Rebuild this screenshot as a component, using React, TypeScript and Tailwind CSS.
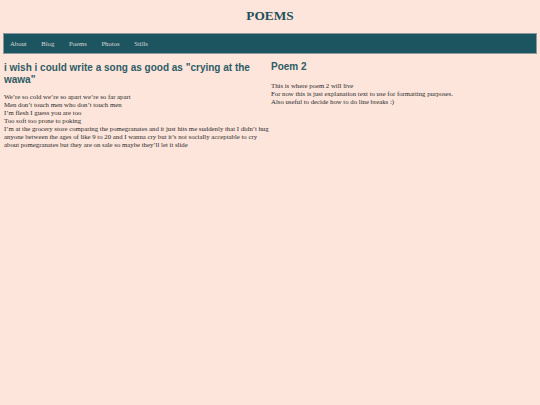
import React from 'react'

const poemOne = [
  'We\u2019re so cold we\u2019re so apart we\u2019re so far apart',
  'Men don\u2019t touch men who don\u2019t touch men',
  'I\u2019m flesh I guess you are too',
  'Too soft too prone to poking',
  'I\u2019m at the grocery store comparing the pomegranates and it just hits me suddenly that I didn\u2019t hug anyone between the ages of like 9 to 20 and I wanna cry but it\u2019s not socially acceptable to cry about pomegranates but they are on sale so maybe they\u2019ll let it slide',
]

const poemTwo = [
  'This is where poem 2 will live',
  'For now this is just explanation text to use for formatting purposes.',
  'Also useful to decide how to do line breaks :)',
]

const links = ['About', 'Blog', 'Poems', 'Photos', 'Stills']

export default function App() {
  return (
    <div className="min-h-[405px] bg-[#fde5db] font-['Liberation_Serif','Times_New_Roman',serif] px-[3px]">
      <h1 className="pt-[8.4px] h-[33px] text-center font-bold text-[13.3px] leading-[15.3px] text-[#1f4f5a]">POEMS</h1>
      <nav className="h-[21px] bg-[#1c5560] border border-[#8a9a9c] flex items-center gap-[14.7px] px-[6px]">
        {links.map((l) => (
          <a key={l} className="text-[6.67px] leading-[7.67px] text-[#dcd6d6]">
            {l}
          </a>
        ))}
      </nav>
      <main className="grid grid-cols-[267px_1fr] pt-[7.5px] pl-px">
        <section className="min-w-0">
          <h2 className="font-['Liberation_Sans',Arial,sans-serif] font-bold text-[10px] leading-[12px] text-[#2d5c66]">
            i wish i could write a song as good as "crying at the wawa"
          </h2>
          <div className="mt-[7.5px] text-[6.77px] leading-[8px] text-[#2a2a2a]">
            {poemOne.map((l, i) => (
              <p key={i}>{l}</p>
            ))}
          </div>
        </section>
        <section className="min-w-0 -mt-px">
          <h2 className="font-['Liberation_Sans',Arial,sans-serif] font-bold text-[10px] leading-[12px] text-[#2d5c66]">
            Poem 2
          </h2>
          <div className="mt-[9px] text-[6.77px] leading-[8px] text-[#2a2a2a]">
            {poemTwo.map((l, i) => (
              <p key={i}>{l}</p>
            ))}
          </div>
        </section>
      </main>
    </div>
  )
}
